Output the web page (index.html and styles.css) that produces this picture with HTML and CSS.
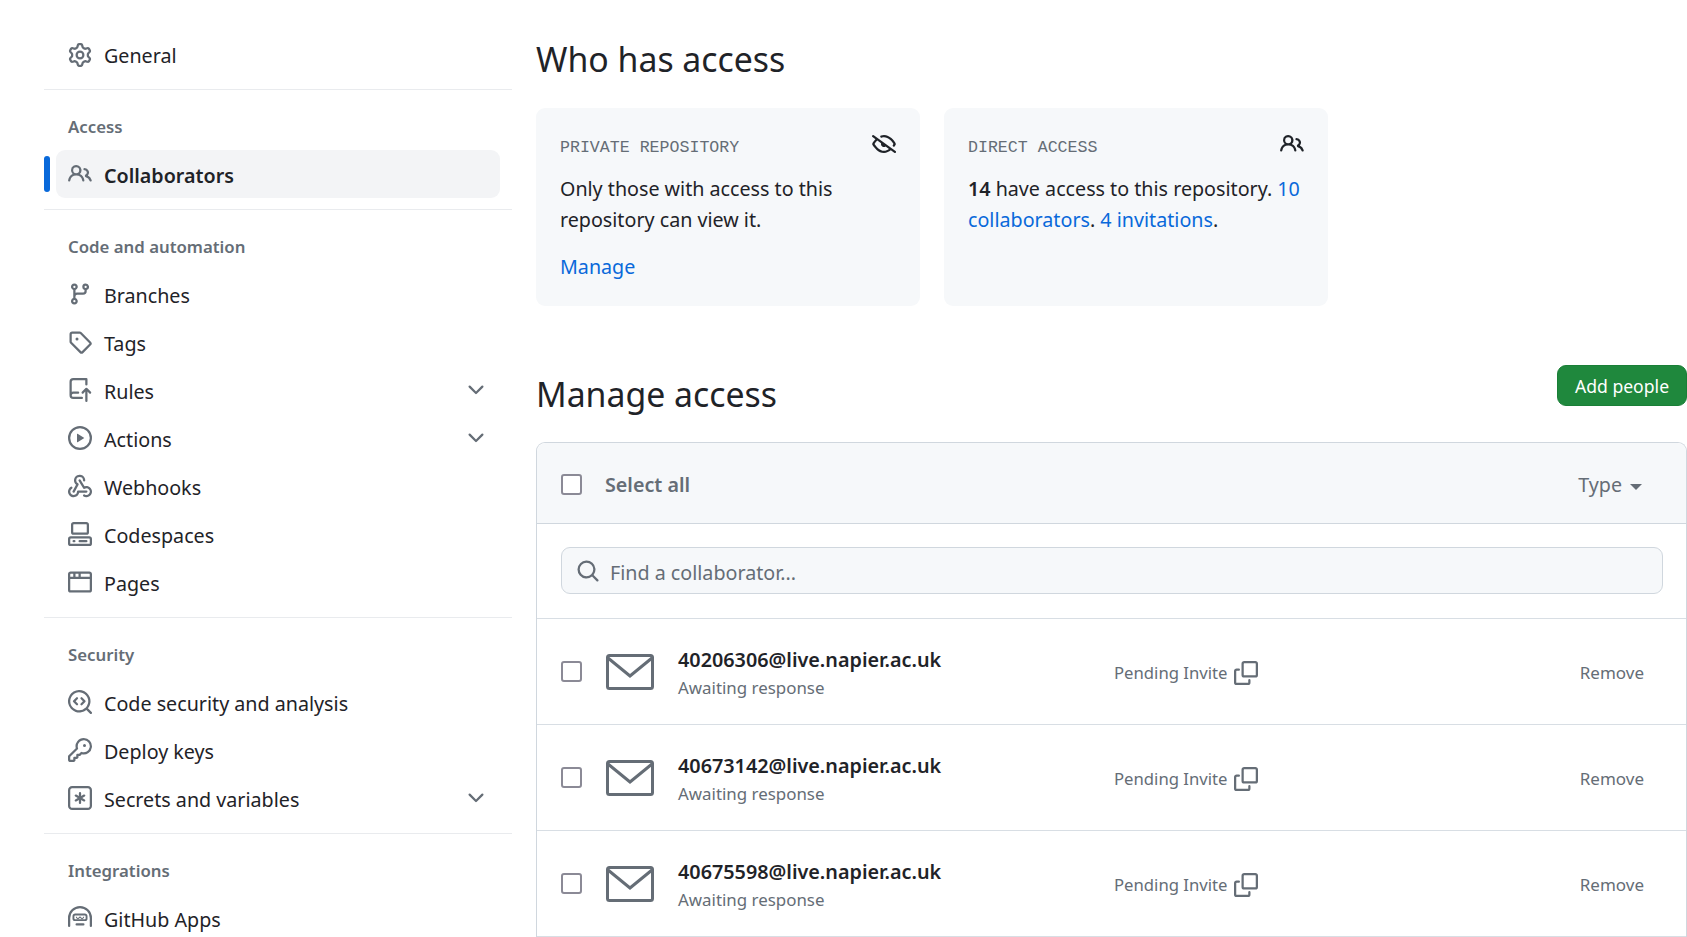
FILE: index.html
```html
<!DOCTYPE html>
<html lang="en">
<head>
  <meta charset="UTF-8">
  <title>Collaborators</title>
  <link rel="stylesheet" href="styles.css">
</head>
<body>

  <svg class="sprite" aria-hidden="true">
    <symbol id="i-gear" viewBox="0 0 16 16"><path d="M8 0a8.2 8.2 0 0 1 .701.031C9.444.095 9.99.645 10.16 1.29l.288 1.107c.018.066.079.158.212.224.231.114.454.243.668.386.123.082.233.09.299.071l1.103-.303c.644-.176 1.392.021 1.82.63.27.385.506.792.704 1.218.315.675.111 1.422-.364 1.891l-.814.806c-.049.048-.098.147-.088.294.016.257.016.515 0 .772-.01.147.038.246.088.294l.814.806c.475.469.679 1.216.364 1.891a7.977 7.977 0 0 1-.704 1.217c-.428.61-1.176.807-1.82.63l-1.102-.302c-.067-.019-.177-.011-.3.071a5.909 5.909 0 0 1-.668.386c-.133.066-.194.158-.211.224l-.29 1.106c-.168.646-.715 1.196-1.458 1.26a8.006 8.006 0 0 1-1.402 0c-.743-.064-1.289-.614-1.458-1.26l-.289-1.106c-.018-.066-.079-.158-.212-.224a5.738 5.738 0 0 1-.668-.386c-.123-.082-.233-.09-.299-.071l-1.103.303c-.644.176-1.392-.021-1.82-.63a8.12 8.12 0 0 1-.704-1.218c-.315-.675-.111-1.422.363-1.891l.815-.806c.05-.048.098-.147.088-.294a6.214 6.214 0 0 1 0-.772c.01-.147-.038-.246-.088-.294l-.815-.806C.635 6.045.431 5.298.746 4.623a7.92 7.92 0 0 1 .704-1.217c.428-.61 1.176-.807 1.82-.63l1.102.302c.067.019.177.011.3-.071.214-.143.437-.272.668-.386.133-.066.194-.158.211-.224l.29-1.106C6.009.645 6.556.095 7.299.03 7.53.01 7.764 0 8 0Zm-.571 1.525c-.036.003-.108.036-.137.146l-.289 1.105c-.147.561-.549.967-.998 1.189-.173.086-.34.183-.5.29-.417.278-.97.423-1.529.27l-1.103-.303c-.109-.03-.175.016-.195.045-.22.312-.412.644-.573.99-.014.031-.021.11.059.19l.815.806c.411.406.562.957.53 1.456a4.709 4.709 0 0 0 0 .582c.032.499-.119 1.05-.53 1.456l-.815.806c-.081.08-.073.159-.059.19.162.346.353.677.573.989.02.03.085.076.195.046l1.102-.303c.56-.153 1.113-.008 1.53.27.161.107.328.204.501.29.447.222.85.629.997 1.189l.289 1.105c.029.109.101.143.137.146a6.6 6.6 0 0 0 1.142 0c.036-.003.108-.036.137-.146l.289-1.105c.147-.561.549-.967.998-1.189.173-.086.34-.183.5-.29.417-.278.97-.423 1.529-.27l1.103.303c.109.029.175-.016.195-.045.22-.313.411-.644.573-.99.014-.031.021-.11-.059-.19l-.815-.806c-.411-.406-.562-.957-.53-1.456a4.709 4.709 0 0 0 0-.582c-.032-.499.119-1.05.53-1.456l.815-.806c.081-.08.073-.159.059-.19a6.464 6.464 0 0 0-.573-.989c-.02-.03-.085-.076-.195-.046l-1.102.303c-.56.153-1.113.008-1.53-.27a4.44 4.44 0 0 0-.501-.29c-.447-.222-.85-.629-.997-1.189l-.289-1.105c-.029-.11-.101-.143-.137-.146a6.6 6.6 0 0 0-1.142 0ZM11 8a3 3 0 1 1-6 0 3 3 0 0 1 6 0ZM9.5 8a1.5 1.5 0 1 0-3.001.001A1.5 1.5 0 0 0 9.5 8Z"/></symbol>
    <symbol id="i-people" viewBox="0 0 16 16"><path d="M2 5.5a3.5 3.5 0 1 1 5.898 2.549 5.508 5.508 0 0 1 3.034 4.084.75.75 0 1 1-1.482.235 4 4 0 0 0-7.9 0 .75.75 0 0 1-1.482-.236A5.507 5.507 0 0 1 3.102 8.05 3.493 3.493 0 0 1 2 5.5ZM11 4a3.001 3.001 0 0 1 2.22 5.018 5.01 5.01 0 0 1 2.56 3.012.749.749 0 0 1-.885.954.752.752 0 0 1-.549-.514 3.507 3.507 0 0 0-2.522-2.372.75.75 0 0 1-.574-.73v-.352a.75.75 0 0 1 .416-.672A1.5 1.5 0 0 0 11 5.5.75.75 0 0 1 11 4Zm-5.5-.5a2 2 0 1 0-.001 3.999A2 2 0 0 0 5.5 3.5Z"/></symbol>
    <symbol id="i-branch" viewBox="0 0 16 16"><path d="M9.5 3.25a2.25 2.25 0 1 1 3 2.122V6A2.5 2.5 0 0 1 10 8.5H6a1 1 0 0 0-1 1v1.128a2.251 2.251 0 1 1-1.5 0V5.372a2.25 2.25 0 1 1 1.5 0v1.836A2.493 2.493 0 0 1 6 7h4a1 1 0 0 0 1-1v-.628A2.25 2.25 0 0 1 9.5 3.25Zm-6 0a.75.75 0 1 0 1.5 0 .75.75 0 0 0-1.5 0Zm8.25-.75a.75.75 0 1 0 0 1.5.75.75 0 0 0 0-1.5ZM4.25 12a.75.75 0 1 0 0 1.5.75.75 0 0 0 0-1.5Z"/></symbol>
    <symbol id="i-tag" viewBox="0 0 16 16"><path d="M1 7.775V2.75C1 1.784 1.784 1 2.75 1h5.025c.464 0 .91.184 1.238.513l6.25 6.25a1.75 1.75 0 0 1 0 2.474l-5.026 5.026a1.75 1.75 0 0 1-2.474 0l-6.25-6.25A1.752 1.752 0 0 1 1 7.775Zm1.5 0c0 .066.026.13.073.177l6.25 6.25a.25.25 0 0 0 .354 0l5.025-5.025a.25.25 0 0 0 0-.354l-6.25-6.25a.25.25 0 0 0-.177-.073H2.75a.25.25 0 0 0-.25.25ZM6 5a1 1 0 1 1 0 2 1 1 0 0 1 0-2Z"/></symbol>
    <symbol id="i-rules" viewBox="0 0 16 16"><path d="M1 2.5A2.5 2.5 0 0 1 3.5 0h8.75a.75.75 0 0 1 .75.75v3.5a.75.75 0 0 1-1.5 0V1.5h-8a1 1 0 0 0-1 1v6.708A2.493 2.493 0 0 1 3.5 9h3.25a.75.75 0 0 1 0 1.5H3.5a1 1 0 0 0 0 2h5.75a.75.75 0 0 1 0 1.5H3.5A2.5 2.5 0 0 1 1 11.5Zm13.23 7.79h-.001l-1.224-1.224v6.184a.75.75 0 0 1-1.5 0V9.066L10.28 10.29a.75.75 0 0 1-1.06-1.061l2.505-2.504a.75.75 0 0 1 1.06 0L15.29 9.23a.751.751 0 0 1-.018 1.042.751.751 0 0 1-1.042.018Z"/></symbol>
    <symbol id="i-play" viewBox="0 0 16 16"><path d="M8 0a8 8 0 1 1 0 16A8 8 0 0 1 8 0ZM1.5 8a6.5 6.5 0 1 0 13 0 6.5 6.5 0 0 0-13 0Zm4.879-2.773 4.264 2.559a.25.25 0 0 1 0 .428l-4.264 2.559A.25.25 0 0 1 6 10.559V5.442a.25.25 0 0 1 .379-.215Z"/></symbol>
    <symbol id="i-webhook" viewBox="0 0 16 16"><path d="M5.5 4.25a2.25 2.25 0 0 1 4.5 0 .75.75 0 0 0 1.5 0 3.75 3.75 0 1 0-6.14 2.889l-2.272 4.258a.75.75 0 0 0 1.324.706L7 7.25a.75.75 0 0 0-.309-1.015A2.25 2.25 0 0 1 5.5 4.25Z"/><path d="M7.364 3.607a.75.75 0 0 1 1.03.257l2.608 4.349a3.75 3.75 0 1 1-.628 6.785.75.75 0 0 1 .752-1.299 2.25 2.25 0 1 0-.033-3.88.75.75 0 0 1-1.03-.256L7.107 4.636a.75.75 0 0 1 .257-1.03Z"/><path d="M2.9 8.776A.75.75 0 0 1 2.625 9.8 2.25 2.25 0 1 0 6 11.75a.75.75 0 0 1 .75-.751h5.5a.75.75 0 0 1 0 1.5H7.425a3.751 3.751 0 1 1-5.55-3.998.75.75 0 0 1 1.024.274Z"/></symbol>
    <symbol id="i-codespaces" viewBox="0 0 16 16"><path d="M0 11.25c0-.966.784-1.75 1.75-1.75h12.5c.966 0 1.75.784 1.75 1.75v3A1.75 1.75 0 0 1 14.25 16H1.75A1.75 1.75 0 0 1 0 14.25Zm2-9.5C2 .784 2.784 0 3.75 0h8.5C13.216 0 14 .784 14 1.75v5a1.75 1.75 0 0 1-1.75 1.75h-8.5A1.75 1.75 0 0 1 2 6.75Zm1.75-.25a.25.25 0 0 0-.25.25v5c0 .138.112.25.25.25h8.5a.25.25 0 0 0 .25-.25v-5a.25.25 0 0 0-.25-.25Zm-2 9.5a.25.25 0 0 0-.25.25v3c0 .138.112.25.25.25h12.5a.25.25 0 0 0 .25-.25v-3a.25.25 0 0 0-.25-.25Z"/><path d="M7 12.75a.75.75 0 0 1 .75-.75h4.5a.75.75 0 0 1 0 1.5h-4.5a.75.75 0 0 1-.75-.75Zm-4 0a.75.75 0 0 1 .75-.75h.5a.75.75 0 0 1 0 1.5h-.5a.75.75 0 0 1-.75-.75Z"/></symbol>
    <symbol id="i-browser" viewBox="0 0 16 16"><path d="M0 2.75C0 1.784.784 1 1.75 1h12.5c.966 0 1.75.784 1.75 1.75v10.5A1.75 1.75 0 0 1 14.25 15H1.75A1.75 1.75 0 0 1 0 13.25ZM14.5 6h-13v7.25c0 .138.112.25.25.25h12.5a.25.25 0 0 0 .25-.25Zm-6-3.5v2h6V2.75a.25.25 0 0 0-.25-.25ZM5 2.5v2h2v-2Zm-3.25 0a.25.25 0 0 0-.25.25V4.5h2v-2Z"/></symbol>
    <symbol id="i-codescan" viewBox="0 0 16 16"><path d="M8.47 4.97a.75.75 0 0 0 0 1.06L9.94 7.5 8.47 8.97a.75.75 0 1 0 1.06 1.06l2-2a.75.75 0 0 0 0-1.06l-2-2a.75.75 0 0 0-1.06 0ZM6.53 6.03a.75.75 0 0 0-1.06-1.06l-2 2a.75.75 0 0 0 0 1.06l2 2a.75.75 0 1 0 1.06-1.06L5.06 7.5l1.47-1.47Z"/><path d="M12.246 13.307a7.501 7.501 0 1 1 1.06-1.06l2.474 2.473a.749.749 0 0 1-.326 1.275.749.749 0 0 1-.734-.215ZM1.5 7.5a6.002 6.002 0 0 0 3.608 5.504 6.002 6.002 0 0 0 6.486-1.117.75.75 0 0 1 .292-.293A6 6 0 1 0 1.5 7.5Z"/></symbol>
    <symbol id="i-key" viewBox="0 0 16 16"><path d="M10.5 0a5.499 5.499 0 1 1-1.288 10.848l-.932.932a.749.749 0 0 1-.53.22H7v.75a.749.749 0 0 1-.22.53l-.5.5a.749.749 0 0 1-.53.22H5v.75a.749.749 0 0 1-.22.53l-.5.5a.749.749 0 0 1-.53.22h-2A1.75 1.75 0 0 1 0 14.25v-2c0-.199.079-.389.22-.53l4.932-4.932A5.5 5.5 0 0 1 10.5 0Zm-4 5.5c-.001.431.069.86.205 1.269a.75.75 0 0 1-.181.768L1.5 12.56v1.69c0 .138.112.25.25.25h1.69l.06-.06v-1.19a.75.75 0 0 1 .75-.75h1.19l.06-.06v-1.19a.75.75 0 0 1 .75-.75h1.19l1.023-1.025a.75.75 0 0 1 .768-.18A4 4 0 1 0 6.5 5.5ZM11 6a1 1 0 1 1 0-2 1 1 0 0 1 0 2Z"/></symbol>
    <symbol id="i-asterisk" viewBox="0 0 16 16"><path d="M0 2.75A2.75 2.75 0 0 1 2.75 0h10.5A2.75 2.75 0 0 1 16 2.75v10.5A2.75 2.75 0 0 1 13.25 16H2.75A2.75 2.75 0 0 1 0 13.25ZM2.75 1.5c-.69 0-1.25.56-1.25 1.25v10.5c0 .69.56 1.25 1.25 1.25h10.5c.69 0 1.25-.56 1.25-1.25V2.75c0-.69-.56-1.25-1.25-1.25Z"/><path d="M8 4a.75.75 0 0 1 .75.75V6.7l1.69-.975a.75.75 0 0 1 .75 1.3L9.5 8l1.69.976a.75.75 0 0 1-.75 1.298L8.75 9.3v1.951a.75.75 0 0 1-1.5 0V9.299l-1.69.976a.75.75 0 0 1-.75-1.3L6.5 8l-1.69-.975a.75.75 0 0 1 .75-1.3l1.69.976V4.75A.75.75 0 0 1 8 4Z"/></symbol>
    <symbol id="i-hubot" viewBox="0 0 16 16"><path d="M0 8a8 8 0 0 1 16 0v5.25a.75.75 0 0 1-1.5 0V8a6.5 6.5 0 1 0-13 0v5.25a.75.75 0 0 1-1.5 0Z"/><path d="M4.75 5h6.5C12.216 5 13 5.784 13 6.75v1.5A1.75 1.75 0 0 1 11.25 10h-6.5A1.75 1.75 0 0 1 3 8.25v-1.5C3 5.784 3.784 5 4.75 5Zm0 1.25a.5.5 0 0 0-.5.5v1.5a.5.5 0 0 0 .5.5h6.5a.5.5 0 0 0 .5-.5v-1.5a.5.5 0 0 0-.5-.5Z"/><path d="M5.3 6.9l1.3 1.2L8 6.9l1.4 1.2 1.3-1.2v.9L9.4 9 8 7.8 6.6 9 5.3 7.8Z"/><path d="M5.75 11.5h4.5a.75.75 0 0 1 0 1.5h-4.5a.75.75 0 0 1 0-1.5Z"/></symbol>
    <symbol id="i-eye-closed" viewBox="0 0 16 16"><path d="M.143 2.31a.75.75 0 0 1 1.047-.167l14.5 10.5a.75.75 0 1 1-.88 1.214l-2.248-1.628C11.346 13.19 9.792 14 8 14c-1.981 0-3.67-.992-4.933-2.078C1.797 10.832.88 9.577.43 8.9a1.619 1.619 0 0 1 0-1.797c.353-.533.995-1.42 1.868-2.305L.31 3.357A.75.75 0 0 1 .143 2.31Zm1.536 5.622A.12.12 0 0 0 1.657 8c0 .021.006.045.022.068.412.621 1.242 1.75 2.366 2.717C5.175 11.758 6.527 12.5 8 12.5c1.195 0 2.31-.488 3.29-1.191L9.063 9.695A2 2 0 0 1 6.058 7.52L3.529 5.688a14.207 14.207 0 0 0-1.85 2.244ZM8 3.5c-.516 0-1.017.09-1.499.251a.75.75 0 1 1-.473-1.423A6.207 6.207 0 0 1 8 2c1.981 0 3.67.992 4.933 2.078 1.27 1.091 2.187 2.345 2.637 3.023a1.62 1.62 0 0 1 0 1.798c-.11.166-.248.365-.41.587a.75.75 0 1 1-1.21-.887c.148-.201.272-.382.371-.53a.119.119 0 0 0 0-.137c-.412-.621-1.242-1.75-2.366-2.717C10.825 4.242 9.473 3.5 8 3.5Z"/></symbol>
    <symbol id="i-chevron" viewBox="0 0 16 16"><path d="M12.78 5.22a.749.749 0 0 1 0 1.06l-4.25 4.25a.749.749 0 0 1-1.06 0L3.22 6.28a.749.749 0 1 1 1.06-1.06L8 8.939l3.72-3.719a.749.749 0 0 1 1.06 0Z"/></symbol>
    <symbol id="i-search" viewBox="0 0 16 16"><path d="M10.68 11.74a6 6 0 0 1-7.922-8.982 6 6 0 0 1 8.982 7.922l3.04 3.04a.749.749 0 0 1-.326 1.275.749.749 0 0 1-.734-.215ZM11.5 7a4.499 4.499 0 1 0-8.997 0A4.499 4.499 0 0 0 11.5 7Z"/></symbol>
    <symbol id="i-copy" viewBox="0 0 16 16"><path d="M0 6.75C0 5.784.784 5 1.75 5h1.5a.75.75 0 0 1 0 1.5h-1.5a.25.25 0 0 0-.25.25v7.5c0 .138.112.25.25.25h7.5a.25.25 0 0 0 .25-.25v-1.5a.75.75 0 0 1 1.5 0v1.5A1.75 1.75 0 0 1 9.25 16h-7.5A1.75 1.75 0 0 1 0 14.25Z"/><path d="M5 1.75C5 .784 5.784 0 6.75 0h7.5C15.216 0 16 .784 16 1.75v7.5A1.75 1.75 0 0 1 14.25 11h-7.5A1.75 1.75 0 0 1 5 9.25Zm1.75-.25a.25.25 0 0 0-.25.25v7.5c0 .138.112.25.25.25h7.5a.25.25 0 0 0 .25-.25v-7.5a.25.25 0 0 0-.25-.25Z"/></symbol>
    <symbol id="i-mail" viewBox="0 0 48 36"><path d="M2 4 24 22 46 4" fill="none" stroke="currentColor" stroke-width="3"/><rect x="1.5" y="1.5" width="45" height="33" rx="2" fill="none" stroke="currentColor" stroke-width="3"/></symbol>
  </svg>

  <div class="page">
    <nav class="sidebar">
      <div class="nav-group nav-top">
        <a class="nav-item"><svg class="icon"><use href="#i-gear"/></svg>General</a>
      </div>
      <div class="nav-group">
        <h3>Access</h3>
        <a class="nav-item active"><svg class="icon"><use href="#i-people"/></svg>Collaborators</a>
      </div>
      <div class="nav-group">
        <h3>Code and automation</h3>
        <a class="nav-item"><svg class="icon"><use href="#i-branch"/></svg>Branches</a>
        <a class="nav-item"><svg class="icon"><use href="#i-tag"/></svg>Tags</a>
        <a class="nav-item"><svg class="icon"><use href="#i-rules"/></svg>Rules<svg class="icon chevron"><use href="#i-chevron"/></svg></a>
        <a class="nav-item"><svg class="icon"><use href="#i-play"/></svg>Actions<svg class="icon chevron"><use href="#i-chevron"/></svg></a>
        <a class="nav-item"><svg class="icon"><use href="#i-webhook"/></svg>Webhooks</a>
        <a class="nav-item"><svg class="icon"><use href="#i-codespaces"/></svg>Codespaces</a>
        <a class="nav-item"><svg class="icon"><use href="#i-browser"/></svg>Pages</a>
      </div>
      <div class="nav-group">
        <h3>Security</h3>
        <a class="nav-item"><svg class="icon"><use href="#i-codescan"/></svg>Code security and analysis</a>
        <a class="nav-item"><svg class="icon"><use href="#i-key"/></svg>Deploy keys</a>
        <a class="nav-item"><svg class="icon"><use href="#i-asterisk"/></svg>Secrets and variables<svg class="icon chevron"><use href="#i-chevron"/></svg></a>
      </div>
      <div class="nav-group">
        <h3>Integrations</h3>
        <a class="nav-item"><svg class="icon"><use href="#i-hubot"/></svg>GitHub Apps</a>
      </div>
    </nav>

    <main class="content">
      <h2>Who has access</h2>
      <div class="cards">
        <div class="card">
          <div class="card-head">
            <span class="card-label">PRIVATE REPOSITORY</span>
            <svg class="icon dark"><use href="#i-eye-closed"/></svg>
          </div>
          <p>Only those with access to this repository can view it.</p>
          <a class="link manage">Manage</a>
        </div>
        <div class="card">
          <div class="card-head">
            <span class="card-label">DIRECT ACCESS</span>
            <svg class="icon dark"><use href="#i-people"/></svg>
          </div>
          <p><strong>14</strong> have access to this repository. <a class="link">10</a> <a class="link">collaborators</a>. <a class="link">4 invitations</a>.</p>
        </div>
      </div>

      <div class="manage-head">
        <h2>Manage access</h2>
        <button class="btn-add" type="button">Add people</button>
      </div>

      <div class="box">
        <div class="box-head">
          <input class="check" type="checkbox">
          <span class="select-all">Select all</span>
          <span class="type-filter">Type<i class="caret"></i></span>
        </div>
        <div class="box-search">
          <label class="search">
            <svg class="icon search-icon"><use href="#i-search"/></svg>
            <input type="text" placeholder="Find a collaborator...">
          </label>
        </div>

        <div class="row">
          <input class="check" type="checkbox">
          <svg class="mail"><use href="#i-mail"/></svg>
          <div class="who">
            <div class="email">40206306@live.napier.ac.uk</div>
            <div class="note">Awaiting response</div>
          </div>
          <div class="status">Pending Invite<svg class="icon copy"><use href="#i-copy"/></svg></div>
          <a class="remove">Remove</a>
        </div>
        <div class="row">
          <input class="check" type="checkbox">
          <svg class="mail"><use href="#i-mail"/></svg>
          <div class="who">
            <div class="email">40673142@live.napier.ac.uk</div>
            <div class="note">Awaiting response</div>
          </div>
          <div class="status">Pending Invite<svg class="icon copy"><use href="#i-copy"/></svg></div>
          <a class="remove">Remove</a>
        </div>
        <div class="row">
          <input class="check" type="checkbox">
          <svg class="mail"><use href="#i-mail"/></svg>
          <div class="who">
            <div class="email">40675598@live.napier.ac.uk</div>
            <div class="note">Awaiting response</div>
          </div>
          <div class="status">Pending Invite<svg class="icon copy"><use href="#i-copy"/></svg></div>
          <a class="remove">Remove</a>
        </div>
      </div>
    </main>
  </div>

</body>
</html>
```

FILE: styles.css
```css
html, body {
  margin: 0;
  height: 937px;
  overflow: hidden;
  background: #fff;
}
body {
  font-family: "Noto Sans", sans-serif;
  font-size: 19.7px;
  color: #1f2328;
}
.sprite {
  display: none;
}
.page {
  display: flex;
  padding-left: 44px;
  gap: 24px;
}
.icon {
  width: 24px;
  height: 24px;
  fill: #656d76;
  flex: none;
}
.icon.dark {
  fill: #1f2328;
}

/* sidebar */
.sidebar {
  width: 468px;
  flex: none;
}
.nav-group {
  padding-bottom: 11px;
  border-bottom: 1px solid #e9ebee;
}
.nav-group:last-child {
  border-bottom: none;
}
.nav-top {
  padding-top: 31px;
  padding-bottom: 10px;
}
.nav-group h3 {
  margin: 25px 0 11px 24px;
  font-size: 16.8px;
  line-height: 24px;
  font-weight: 600;
  color: #656d76;
}
.nav-item {
  position: relative;
  display: flex;
  align-items: center;
  gap: 12px;
  height: 48px;
  width: 444px;
  margin-left: 12px;
  padding: 2px 12px 0;
  box-sizing: border-box;
  border-radius: 9px;
}
.nav-item .icon {
  margin-top: -2px;
}
.nav-top .nav-item {
  padding-top: 0;
}
.nav-top .icon {
  margin-top: 0;
}
.nav-item.active {
  background: #f3f4f6;
  font-weight: 600;
}
.nav-item.active::before {
  content: "";
  position: absolute;
  left: -12px;
  top: 6px;
  width: 6px;
  height: 36px;
  border-radius: 4px;
  background: #0969da;
}
.chevron {
  margin-left: auto;
}

/* main column */
.content {
  flex: 1;
  min-width: 0;
  padding-top: 32px;
}
h2 {
  margin: 0 0 22px;
  font-size: 33.8px;
  line-height: 54px;
  font-weight: 400;
}
.cards {
  display: flex;
  gap: 24px;
}
.card {
  width: 384px;
  height: 198px;
  padding: 24px;
  box-sizing: border-box;
  border-radius: 9px;
  background: #f6f8fa;
}
.card-head {
  display: flex;
  justify-content: space-between;
  height: 29px;
}
.card-label {
  font-family: "Liberation Mono", monospace;
  font-size: 16.6px;
  line-height: 32px;
  color: #656d76;
}
.card p {
  margin: 12px 0 0;
  line-height: 31px;
}
.link {
  color: #0969da;
}
.manage {
  display: block;
  margin-top: 16px;
  line-height: 31px;
}
.card strong {
  font-weight: 600;
}

.manage-head {
  display: flex;
  justify-content: space-between;
  margin-top: 59px;
}
.manage-head h2 {
  margin: 2px 0 21px;
}
.btn-add {
  width: 130px;
  height: 41px;
  border: 1px solid #1a7f37;
  border-radius: 9px;
  background: #1f883d;
  color: #fff;
  font: inherit;
  font-size: 17.6px;
}

/* collaborators box */
.box {
  border: 1.5px solid #d0d7de;
  border-bottom: none;
  border-radius: 9px 9px 0 0;
  box-sizing: border-box;
}
.box-head {
  display: flex;
  align-items: center;
  height: 81px;
  padding: 3px 44px 0 24px;
  box-sizing: border-box;
  background: #f6f8fa;
  border-bottom: 1.5px solid #d0d7de;
  border-radius: 9px 9px 0 0;
}
.check {
  appearance: none;
  width: 21px;
  height: 21px;
  margin: 0;
  border: 2.5px solid #8b8a96;
  border-radius: 3px;
  background: #fff;
  box-sizing: border-box;
  flex: none;
}
.select-all {
  margin-left: 23px;
  font-weight: 600;
  color: #656d76;
}
.type-filter {
  display: flex;
  align-items: center;
  margin-left: auto;
  color: #656d76;
}
.caret {
  margin: 4px 0 0 8px;
  border: 6px solid transparent;
  border-top-color: #656d76;
  border-bottom: none;
}
.box-search {
  padding: 23px 23px 24px 24px;
  border-bottom: 1.5px solid #d8dee4;
}
.search {
  display: flex;
  align-items: center;
  gap: 10px;
  height: 47px;
  padding: 0 14px;
  box-sizing: border-box;
  border: 1.5px solid #d0d7de;
  border-radius: 9px;
  background: #f6f8fa;
}
.search input {
  flex: 1;
  padding: 3px 0 0;
  border: none;
  outline: none;
  background: transparent;
  font: inherit;
}
.search input::placeholder {
  color: #656d76;
  opacity: 1;
}
.row {
  display: flex;
  align-items: center;
  height: 106px;
  padding: 0 42px 0 24px;
  box-sizing: border-box;
  border-bottom: 1.5px solid #d8dee4;
}
.mail {
  width: 48px;
  height: 36px;
  margin-left: 24px;
  color: #656d76;
  flex: none;
}
.who {
  width: 436px;
  margin-left: 24px;
  flex: none;
}
.email {
  font-weight: 600;
  font-size: 19.8px;
  line-height: 29px;
  margin-top: 3px;
}
.note {
  font-size: 16.9px;
  line-height: 28px;
  color: #656d76;
}
.status {
  display: flex;
  align-items: center;
  gap: 6px;
  margin-top: 2px;
  font-size: 16.7px;
  color: #656d76;
}
.remove {
  margin-left: auto;
  margin-top: 2px;
  font-size: 17px;
  color: #656d76;
}
```
